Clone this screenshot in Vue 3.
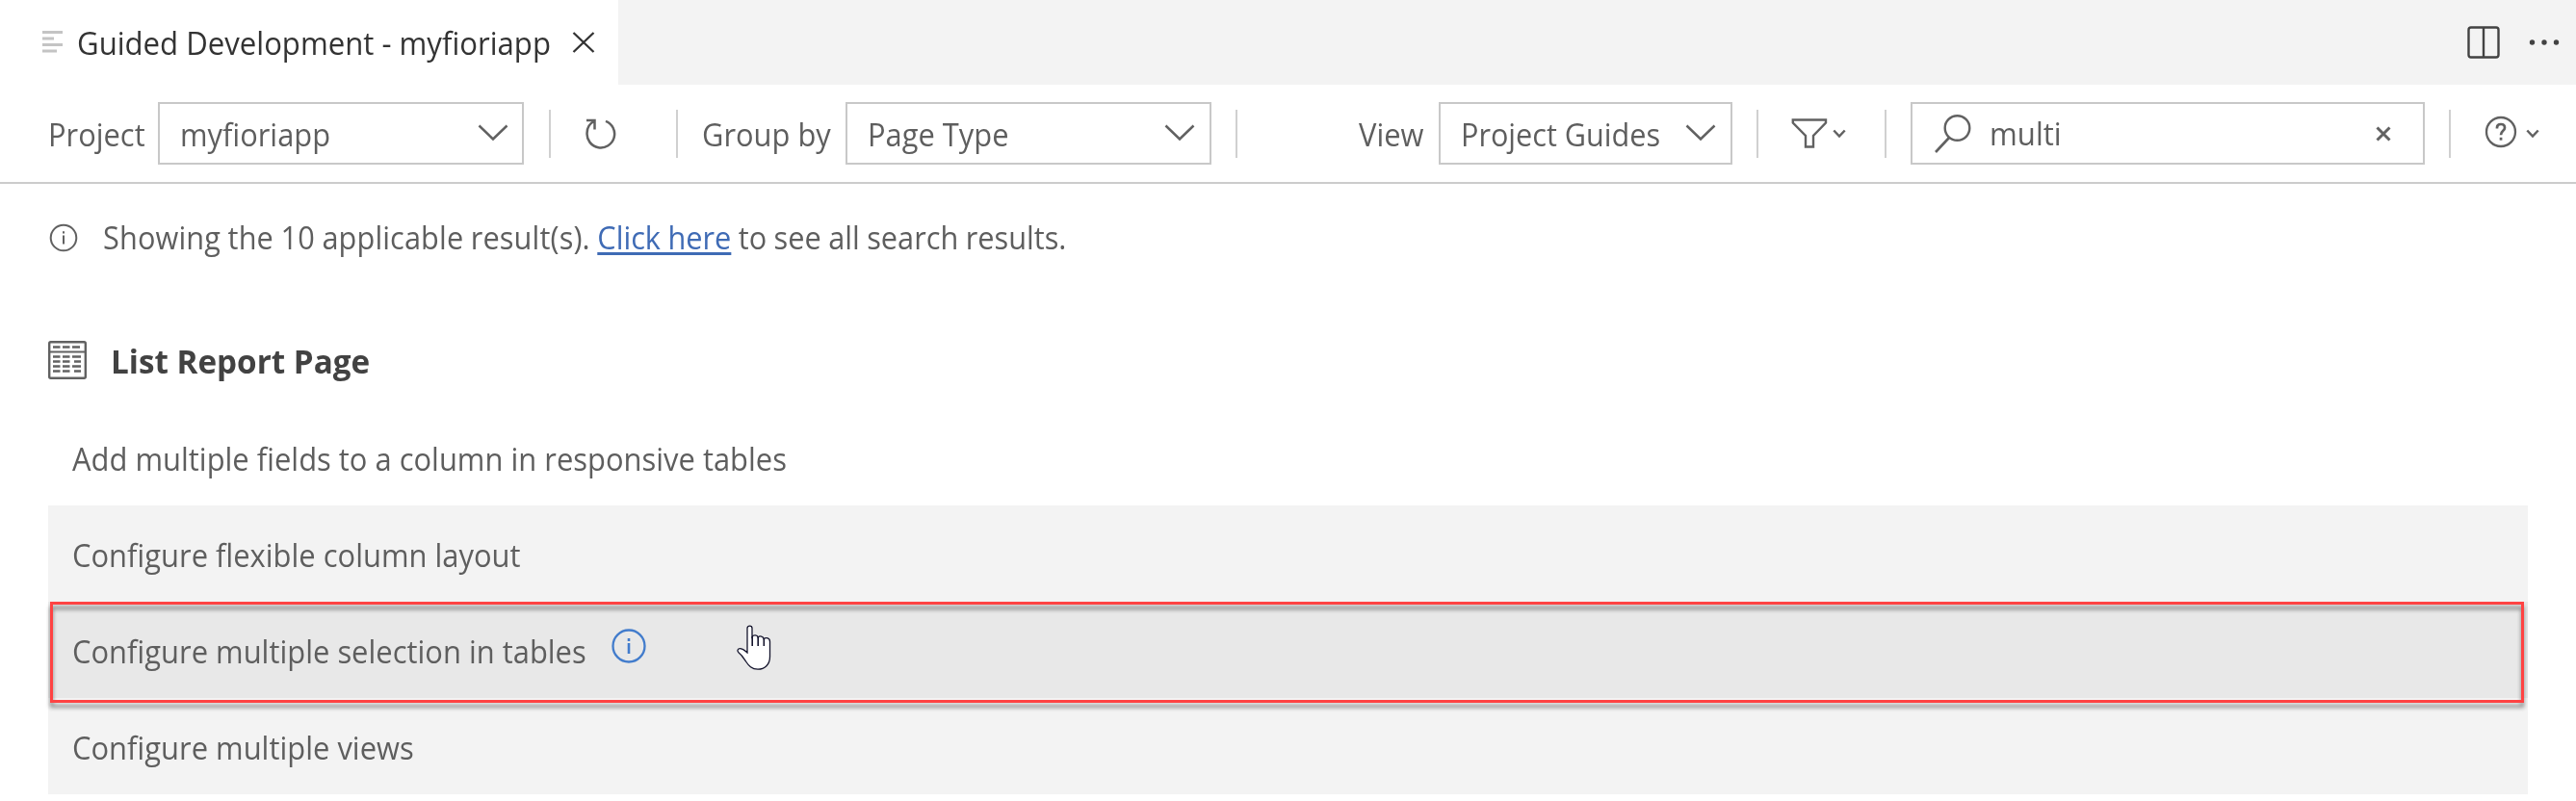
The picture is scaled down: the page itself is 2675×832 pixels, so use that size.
<script setup>
const guides = [
  { label: 'Add multiple fields to a column in responsive tables', tone: 'clear' },
  { label: 'Configure flexible column layout', tone: 'shade' },
  { label: 'Configure multiple selection in tables', tone: 'hover', info: true },
  { label: 'Configure multiple views', tone: 'shade' }
]
</script>

<template>
  <div class="page">
    <header class="tabs">
      <div class="tab">
        <svg class="lines" width="22" height="24" viewBox="0 0 22 24"><path d="M0 2.5H21M0 9H12M0 15.5H21M0 22H15" stroke="#c4c4c4" stroke-width="3" fill="none" /></svg>
        <span class="title"><span class="t">Guided Development - myfioriapp</span></span>
        <svg width="24" height="22" viewBox="0 0 24 22"><path d="M1.500 1L22.500 21M22.500 1L1.500 21" stroke="#333" stroke-width="2.300" fill="none" /></svg>
      </div>
      <div class="actions">
        <svg width="34" height="34" viewBox="0 0 34 34"><rect x="1.500" y="1.500" width="31" height="31" rx="2.500" fill="none" stroke="#424242" stroke-width="2.400" /><path d="M17 2V32" stroke="#424242" stroke-width="2.400" /></svg>
        <svg class="dots" width="32" height="8" viewBox="0 0 32 8"><g fill="#424242"><circle cx="3.500" cy="4" r="2.700" /><circle cx="16" cy="4" r="2.700" /><circle cx="28.500" cy="4" r="2.700" /></g></svg>
      </div>
    </header>

    <div class="toolbar">
      <span class="label w-project"><span class="t">Project</span></span>
      <div class="select s-project"><span class="t">myfioriapp</span>
        <svg class="chev" width="32" height="18" viewBox="0 0 32 18"><path d="M1.500 1.500L16 15.500L30.500 1.500" /></svg>
      </div>
      <i class="sep sep-a"></i>
      <svg class="refresh" width="34" height="34" viewBox="0 0 34 34"><path d="M2 4H10.500V13.500M9.800 5C5 7.500 2.600 12 2.600 17A14.300 14.300 0 1 0 22 4.800" fill="none" stroke="#616161" stroke-width="2.500" /></svg>
      <i class="sep sep-b"></i>
      <span class="label w-group"><span class="t">Group by</span></span>
      <div class="select s-group"><span class="t">Page Type</span>
        <svg class="chev" width="32" height="18" viewBox="0 0 32 18"><path d="M1.500 1.500L16 15.500L30.500 1.500" /></svg>
      </div>
      <i class="sep sep-c"></i>
      <span class="label w-view"><span class="t">View</span></span>
      <div class="select s-view"><span class="t">Project Guides</span>
        <svg class="chev" width="32" height="18" viewBox="0 0 32 18"><path d="M1.500 1.500L16 15.500L30.500 1.500" /></svg>
      </div>
      <i class="sep sep-d"></i>
      <svg class="funnel" width="38" height="32" viewBox="0 0 38 32"><path d="M1.800 1.500H36V4.500L23 18V29.500H15V18L1.800 4.500Z" fill="none" stroke="#616161" stroke-width="2.400" /></svg>
      <svg class="mini m-filter" width="14" height="10" viewBox="0 0 14 10"><path d="M1.300 1.500L7 7.500L12.700 1.500" /></svg>
      <i class="sep sep-e"></i>
      <div class="search">
        <svg width="40" height="42" viewBox="0 0 40 42"><circle cx="24.500" cy="15" r="12.800" fill="none" stroke="#616161" stroke-width="2.400" /><path d="M16 25L2 40" stroke="#616161" stroke-width="2.600" /></svg>
        <span class="query"><span class="t">multi</span></span>
        <svg width="16" height="16" viewBox="0 0 16 16"><path d="M1.500 1.500L14.500 14.500M14.500 1.500L1.500 14.500" stroke="#616161" stroke-width="3" /></svg>
      </div>
      <i class="sep sep-f"></i>
      <svg class="help" width="34" height="34" viewBox="0 0 34 34"><circle cx="17" cy="17" r="15" fill="none" stroke="#616161" stroke-width="2.300" /><path d="M13 13.500V12.500C13 10 14.500 9 17 9S21 10.200 21 12.700C21 16 17 15.500 17 20.200" fill="none" stroke="#616161" stroke-width="2.700" /><rect x="15.700" y="22.800" width="2.700" height="2.900" fill="#616161" /></svg>
      <svg class="mini m-help" width="14" height="10" viewBox="0 0 14 10"><path d="M1.300 1.500L7 7.500L12.700 1.500" /></svg>
    </div>

    <p class="notice">
      <svg width="30" height="30" viewBox="0 0 30 30"><circle cx="15" cy="15" r="13.300" fill="none" stroke="#616161" stroke-width="2" /><path d="M15 12.500V21.500M15 8.300V10.500" stroke="#616161" stroke-width="2" /></svg>
      <span class="t"><span class="lead">Showing the 10 applicable result(s). </span><a>Click here</a> to see all search results.</span>
    </p>

    <h2 class="section">
      <svg width="40" height="40" viewBox="0 0 40 40" fill="none" stroke="#616161"><rect x="1.200" y="1.200" width="37.600" height="37.600" rx="1.500" stroke-width="2.400" /><path d="M1 11.500H39" stroke-width="2.200" /><path d="M5 6.500H12.500M15 6.500H22.500M25 6.500H33M5 16.500H12.500M15 16.500H22.500M25 16.500H34M5 21.500H12.500M15 21.500H22.500M27 21.500H34M5 26.500H12.500M15 26.500H22.500M25 26.500H34M5 31.500H12.500M15 31.500H22.500M27 31.500H34" stroke-width="2.400" /></svg>
      <span class="tb">List Report Page</span>
    </h2>

    <ul class="list">
      <li v-for="g in guides" :key="g.label" :class="['row', g.tone]">
        <span class="t">{{ g.label }}</span>
        <template v-if="g.info">
          <svg class="info" width="36" height="36" viewBox="0 0 36 36"><circle cx="18" cy="18" r="16.500" fill="none" stroke="#427ccc" stroke-width="2.300" /><path d="M18 15V26M18 10V13" stroke="#427ccc" stroke-width="2.600" /></svg>
          <svg class="hand" width="37" height="48" viewBox="0 0 37 48"><path d="M11 29V3.500C11 0.200 16 0.200 16 3.500V12.500C17.500 10 21.500 10.500 22.200 13C24 11 27.500 12 28.200 14.500C30.500 12.800 34.500 13.500 34.500 17.500V33C34.500 41.500 29 46.200 22 46.200C15.500 46.200 12.500 42.500 9.500 38C7 34.200 5.500 31.500 2.200 29C0 27 1 24.700 3.500 24.700C6.500 24.700 8.500 27 11 29Z" fill="#fff" stroke="#14142c" stroke-width="1.300" /><path d="M16.200 12V22M22.200 13V22M28.300 14V22" stroke="#14142c" stroke-width="1.600" /></svg>
          <span class="frame"></span>
        </template>
      </li>
    </ul>
  </div>
</template>

<style>
body { margin: 0; background: #fff; }
</style>

<style scoped>
.page { width: 2675px; height: 832px; overflow: hidden; background: #fff; color: #5e5e5e; font: 33px/44px "Open Sans", "Noto Sans", sans-serif; }
svg { display: block; flex: none; }
.t { display: inline-block; white-space: nowrap; transform: scaleX(.943); transform-origin: 0 50%; }
.tabs { height: 88px; background: #f3f3f3; display: flex; justify-content: space-between; align-items: center; }
.tab { box-sizing: border-box; width: 642px; height: 88px; padding-left: 44px; background: #fff; color: #333; display: flex; align-items: center; }
.title { width: 514px; margin: 2px 0 0 14px; }
.lines { margin-bottom: 2px; }
.actions { display: flex; align-items: center; gap: 30px; padding-right: 17px; }
.toolbar { box-sizing: border-box; height: 103px; padding: 0 0 0 50px; border-bottom: 2px solid #ccc; display: flex; align-items: center; }
.label { flex: none; margin-top: 2px; }
.label .t, .select .t { transform: scaleX(.935); }
.w-project { width: 114px; }
.w-group { width: 149px; margin-left: 25px; }
.w-view { width: 83px; margin-left: 126px; }
.select, .search { box-sizing: border-box; flex: none; height: 65px; border: 2px solid #c8c8c8; display: flex; align-items: center; justify-content: space-between; padding: 0 14px 0 21px; }
.select .t { flex: 1 1 0; min-width: 0; padding-top: 2px; }
.chev { margin: 0 0 1px; }
.chev path, .mini path { fill: none; stroke: #616161; stroke-width: 2.500; }
.s-project { width: 380px; }
.s-group { width: 380px; padding-right: 15px; }
.s-view { width: 305px; padding-right: 15px; }
.s-view .t { transform: scaleX(.928); }
.sep { flex: none; width: 2px; height: 50px; background: #d0d0d0; }
.sep-a { margin-left: 26px; }
.refresh { margin-left: 35px; margin-bottom: 2px; }
.sep-b { margin-left: 61px; }
.sep-c { margin-left: 25px; }
.sep-d { margin-left: 25px; }
.funnel { margin-left: 34px; }
.mini { margin-top: 1px; }
.m-filter { margin-left: 5px; }
.sep-e { margin-left: 40px; }
.search { width: 534px; margin-left: 25px; padding: 0 33px 0 22px; }
.query { flex: 1; padding-left: 18px; }
.sep-f { margin-left: 25px; }
.help { margin-left: 35px; margin-bottom: 3px; }
.m-help { margin-left: 9px; }
.notice { margin: 34px 0 0 51px; height: 44px; display: flex; align-items: center; gap: 26px; }
.notice .t { transform: scaleX(.931); word-spacing: -.6px; }
.lead { letter-spacing: .12px; }
.notice a { color: #3f6bb5; text-decoration: underline; text-decoration-thickness: 3px; text-underline-offset: 3px; text-decoration-skip-ink: none; }
.section { margin: 83px 0 0 50px; height: 44px; display: flex; align-items: center; gap: 25px; font-size: 34.500px; font-weight: 700; color: #424242; }
.tb { display: inline-block; transform: scaleX(.963); transform-origin: 0 50%; margin-top: 2px; white-space: nowrap; }
.list { list-style: none; margin: 29px 50px 0; padding: 0; }
.row { position: relative; box-sizing: border-box; height: 100px; padding: 3px 0 0 25px; display: flex; align-items: center; }
.row .t { transform: scaleX(.937); }
.shade { background: #f3f3f3; }
.hover { background: #e8e8e8; }
.info { margin: -12px 0 0 -10px; }
.hand { position: absolute; left: 715px; top: 24px; }
.frame { position: absolute; z-index: 1; left: 2px; right: 4px; top: 0; height: 99px; border: 3px solid #ff4343; filter: drop-shadow(0 5px 2px rgba(0, 0, 0, .45)); }
</style>
